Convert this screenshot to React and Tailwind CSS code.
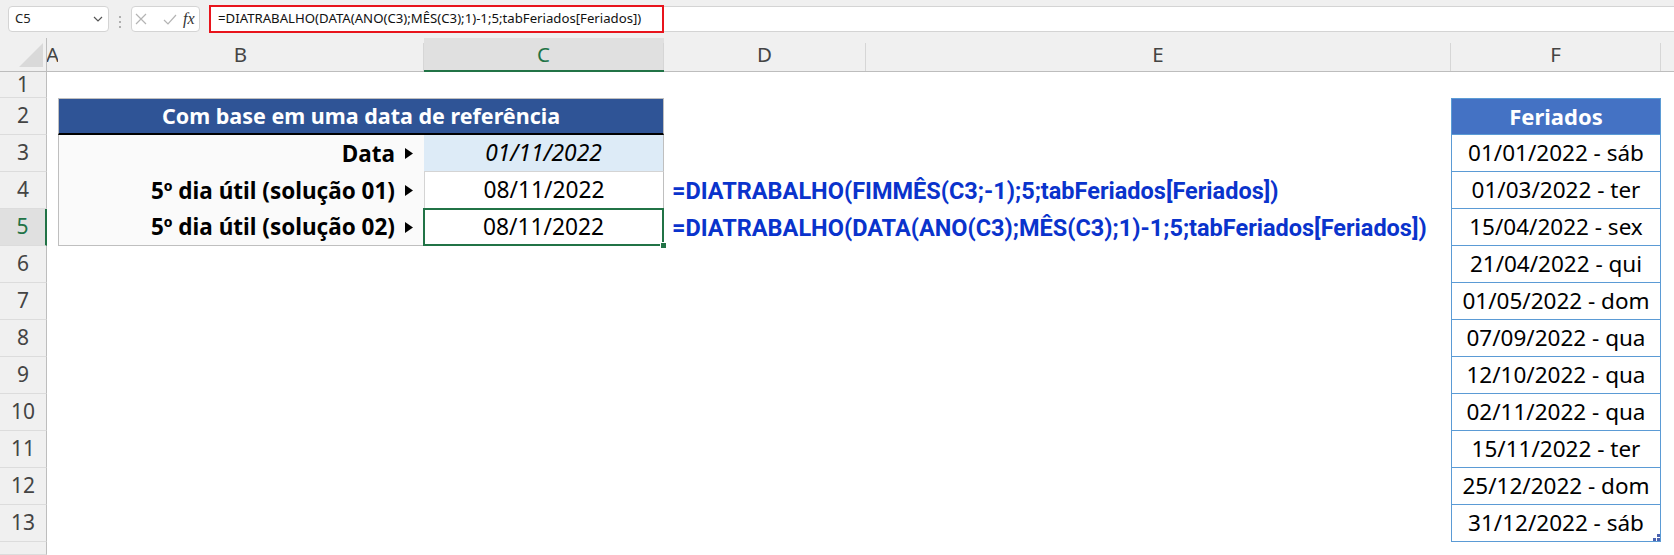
import React from 'react';

const feriados = [
  '01/01/2022 - sáb',
  '01/03/2022 - ter',
  '15/04/2022 - sex',
  '21/04/2022 - qui',
  '01/05/2022 - dom',
  '07/09/2022 - qua',
  '12/10/2022 - qua',
  '02/11/2022 - qua',
  '15/11/2022 - ter',
  '25/12/2022 - dom',
  '31/12/2022 - sáb',
];

// full class names so tailwind picks them up
const fRows = [
  'row-start-3',
  'row-start-4',
  'row-start-5',
  'row-start-6',
  'row-start-7',
  'row-start-8',
  'row-start-9',
  'row-start-10',
  'row-start-11',
  'row-start-12',
  'row-start-13',
];

const rowHeads = [
  { n: 1, cls: 'row-start-1' },
  { n: 2, cls: 'row-start-2' },
  { n: 3, cls: 'row-start-3' },
  { n: 4, cls: 'row-start-4' },
  { n: 5, cls: 'row-start-5' },
  { n: 6, cls: 'row-start-6' },
  { n: 7, cls: 'row-start-7' },
  { n: 8, cls: 'row-start-8' },
  { n: 9, cls: 'row-start-9' },
  { n: 10, cls: 'row-start-10' },
  { n: 11, cls: 'row-start-11' },
  { n: 12, cls: 'row-start-12' },
  { n: 13, cls: 'row-start-13' },
  { n: '', cls: 'row-start-14' },
];

function Tri() {
  return (
    <svg width="8" height="11" viewBox="0 0 8 11" className="ml-[10px] shrink-0">
      <path d="M0 0L8 5.5L0 11Z" fill="#000" />
    </svg>
  );
}

function FormulaBar() {
  return (
    <div className="flex h-[38px] bg-[#f0f0f0] pt-[6px]">
      <div className="ml-[8px] flex h-[26px] w-[101px] items-center justify-between rounded-[4px] border border-[#d4d4d4] bg-white pl-[6px] pr-[5px] text-[13px] text-[#222]">
        <span>C5</span>
        <svg width="10" height="6" viewBox="0 0 10 6">
          <path d="M1 1L5 5L9 1" fill="none" stroke="#555" strokeWidth="1.2" />
        </svg>
      </div>
      <div className="flex w-[22px] flex-col items-center justify-center gap-[3px]">
        <span className="h-[2px] w-[2px] rounded-full bg-[#9a9a9a]" />
        <span className="h-[2px] w-[2px] rounded-full bg-[#9a9a9a]" />
        <span className="h-[2px] w-[2px] rounded-full bg-[#9a9a9a]" />
      </div>
      <div className="flex h-[26px] w-[69px] items-center rounded-[4px] border border-[#d4d4d4] bg-white">
        <svg width="12" height="12" viewBox="0 0 12 12" className="ml-[3px]">
          <path d="M1 1L11 11M11 1L1 11" stroke="#b4b4b4" strokeWidth="1.2" />
        </svg>
        <svg width="14" height="11" viewBox="0 0 14 11" className="ml-[16px]">
          <path d="M1 6L5 10L13 1" fill="none" stroke="#b4b4b4" strokeWidth="1.2" />
        </svg>
        <span className="ml-[6px] font-['Liberation_Serif',serif] text-[16px] italic leading-none text-[#333]">
          fx
        </span>
      </div>
      <div className="ml-[9px] flex h-[26px] flex-1 items-center border-y border-[#d4d4d4] bg-white">
        <div className="-my-[1px] flex h-[28px] w-[455px] items-center border-[2.5px] border-[#e8141c] pl-[7px] text-[13.2px] text-[#111]">
          =DIATRABALHO(DATA(ANO(C3);MÊS(C3);1)-1;5;tabFeriados[Feriados])
        </div>
      </div>
    </div>
  );
}

function HeadCell({ w, label, selected }) {
  return (
    <div
      className={
        'flex h-full shrink-0 ' +
        w +
        (selected ? ' border-b-2 border-[#217346] bg-[#e0e0e0]' : ' border-b border-[#bdbdbd]')
      }
    >
      <div
        className={
          'flex flex-1 items-center justify-center overflow-hidden ' +
          (selected ? 'text-[#217346]' : 'text-[#444]')
        }
      >
        {label}
      </div>
      <div className="mt-[5px] w-px self-stretch bg-[#d6d6d6]" />
    </div>
  );
}

function ColumnHeaders() {
  return (
    <div className="flex h-[34px] bg-[#f0f0f0] text-[20.5px]">
      <div className="flex h-full w-[47px] shrink-0 items-end justify-end border-b border-r border-[#bdbdbd] pb-[4px] pr-[3px]">
        <svg width="24" height="24" viewBox="0 0 24 24">
          <path d="M24 0L24 24L0 24Z" fill="#d9d9d9" />
        </svg>
      </div>
      <div className="flex h-full w-[11px] shrink-0 items-center overflow-hidden border-b border-[#bdbdbd] text-[#444]">
        <span className="-ml-[1px]">A</span>
      </div>
      <HeadCell w="w-[366px]" label="B" />
      <HeadCell w="w-[240px]" label="C" selected />
      <HeadCell w="w-[202px]" label="D" />
      <HeadCell w="w-[585px]" label="E" />
      <HeadCell w="w-[210px]" label="F" />
      <div className="h-full flex-1 border-b border-[#bdbdbd]" />
    </div>
  );
}

function Sheet() {
  return (
    <div className="grid h-[483px] grid-cols-[47px_11px_366px_240px_202px_585px_210px_1fr] grid-rows-[26px_repeat(12,37px)_1fr] bg-white text-[22.75px] text-black">
      {rowHeads.map((r, i) => (
        <div
          key={i}
          className={
            'col-start-1 flex items-center justify-center border-b border-[#dcdcdc] text-[21px] ' +
            r.cls +
            (r.n === 5
              ? ' border-r-2 border-r-[#217346] bg-[#e0e0e0] text-[#217346]'
              : ' border-r border-r-[#bdbdbd] bg-[#f0f0f0] text-[#444]')
          }
        >
          {r.n}
        </div>
      ))}

      {/* reference table */}
      <div className="col-span-2 col-start-3 row-start-2 flex items-center justify-center border-x border-t border-[#bfbfbf] border-b-2 border-b-black bg-[#2f5496] text-[21.5px] font-bold text-white">
        Com base em uma data de referência
      </div>

      <div className="col-start-3 row-start-3 flex items-center justify-end border-l border-[#bfbfbf] bg-[#fafafa] pr-[11px] text-[22.5px] font-bold">
        Data
        <Tri />
      </div>
      <div className="col-start-4 row-start-3 flex items-center justify-center border-b border-r border-[#d4d4d4] border-r-[#bfbfbf] bg-[#ddebf7] italic">
        01/11/2022
      </div>

      <div className="col-start-3 row-start-4 flex items-center justify-end border-l border-[#bfbfbf] bg-[#fafafa] pr-[11px] text-[22.5px] font-bold">
        5º dia útil (solução 01)
        <Tri />
      </div>
      <div className="col-start-4 row-start-4 flex items-center justify-center border-b border-l border-r border-[#d4d4d4] border-r-[#bfbfbf] bg-white">
        08/11/2022
      </div>

      <div className="col-start-3 row-start-5 flex items-center justify-end border-b border-l border-[#bfbfbf] bg-[#fafafa] pr-[11px] text-[22.5px] font-bold">
        5º dia útil (solução 02)
        <Tri />
      </div>
      <div className="relative col-start-4 row-start-5 flex items-center justify-center border-b border-r border-[#bfbfbf] bg-white">
        08/11/2022
        <div className="absolute -left-[1px] -top-[1px] -bottom-[1px] -right-[1px] border-2 border-[#217346]" />
        <div className="absolute -bottom-[4px] -right-[4px] h-[7px] w-[7px] border border-white bg-[#217346]" />
      </div>

      {/* formulas */}
      <div className="col-span-3 col-start-5 row-start-4 flex items-center whitespace-nowrap pl-[8px] pt-[3px] font-['Roboto',sans-serif] text-[23.5px] font-bold text-[#0a33cc]">
        =DIATRABALHO(FIMMÊS(C3;-1);5;tabFeriados[Feriados])
      </div>
      <div className="col-span-3 col-start-5 row-start-5 flex items-center whitespace-nowrap pl-[8px] pt-[3px] font-['Roboto',sans-serif] text-[23.5px] font-bold text-[#0a33cc]">
        =DIATRABALHO(DATA(ANO(C3);MÊS(C3);1)-1;5;tabFeriados[Feriados])
      </div>

      {/* feriados table */}
      <div className="col-start-7 row-start-2 flex items-center justify-center border border-[#5b9bd5] bg-[#4472c4] text-[22px] font-bold text-white">
        Feriados
      </div>
      {feriados.map((f, i) => (
        <div
          key={f}
          className={
            'relative col-start-7 flex items-center justify-center whitespace-pre border-x border-b border-[#5b9bd5] bg-white text-[22.5px] ' +
            fRows[i]
          }
        >
          {f}
          {i === feriados.length - 1 && (
            <svg width="7" height="7" viewBox="0 0 7 7" className="absolute bottom-0 right-0">
              <rect x="4" y="0" width="3" height="3" fill="#4a62b0" />
              <rect x="0" y="4" width="3" height="3" fill="#4a62b0" />
              <rect x="4" y="4" width="3" height="3" fill="#4a62b0" />
            </svg>
          )}
        </div>
      ))}
    </div>
  );
}

export default function App() {
  return (
    <div className="h-[555px] w-[1674px] overflow-hidden bg-white font-['Noto_Sans',sans-serif]">
      <FormulaBar />
      <ColumnHeaders />
      <Sheet />
    </div>
  );
}
